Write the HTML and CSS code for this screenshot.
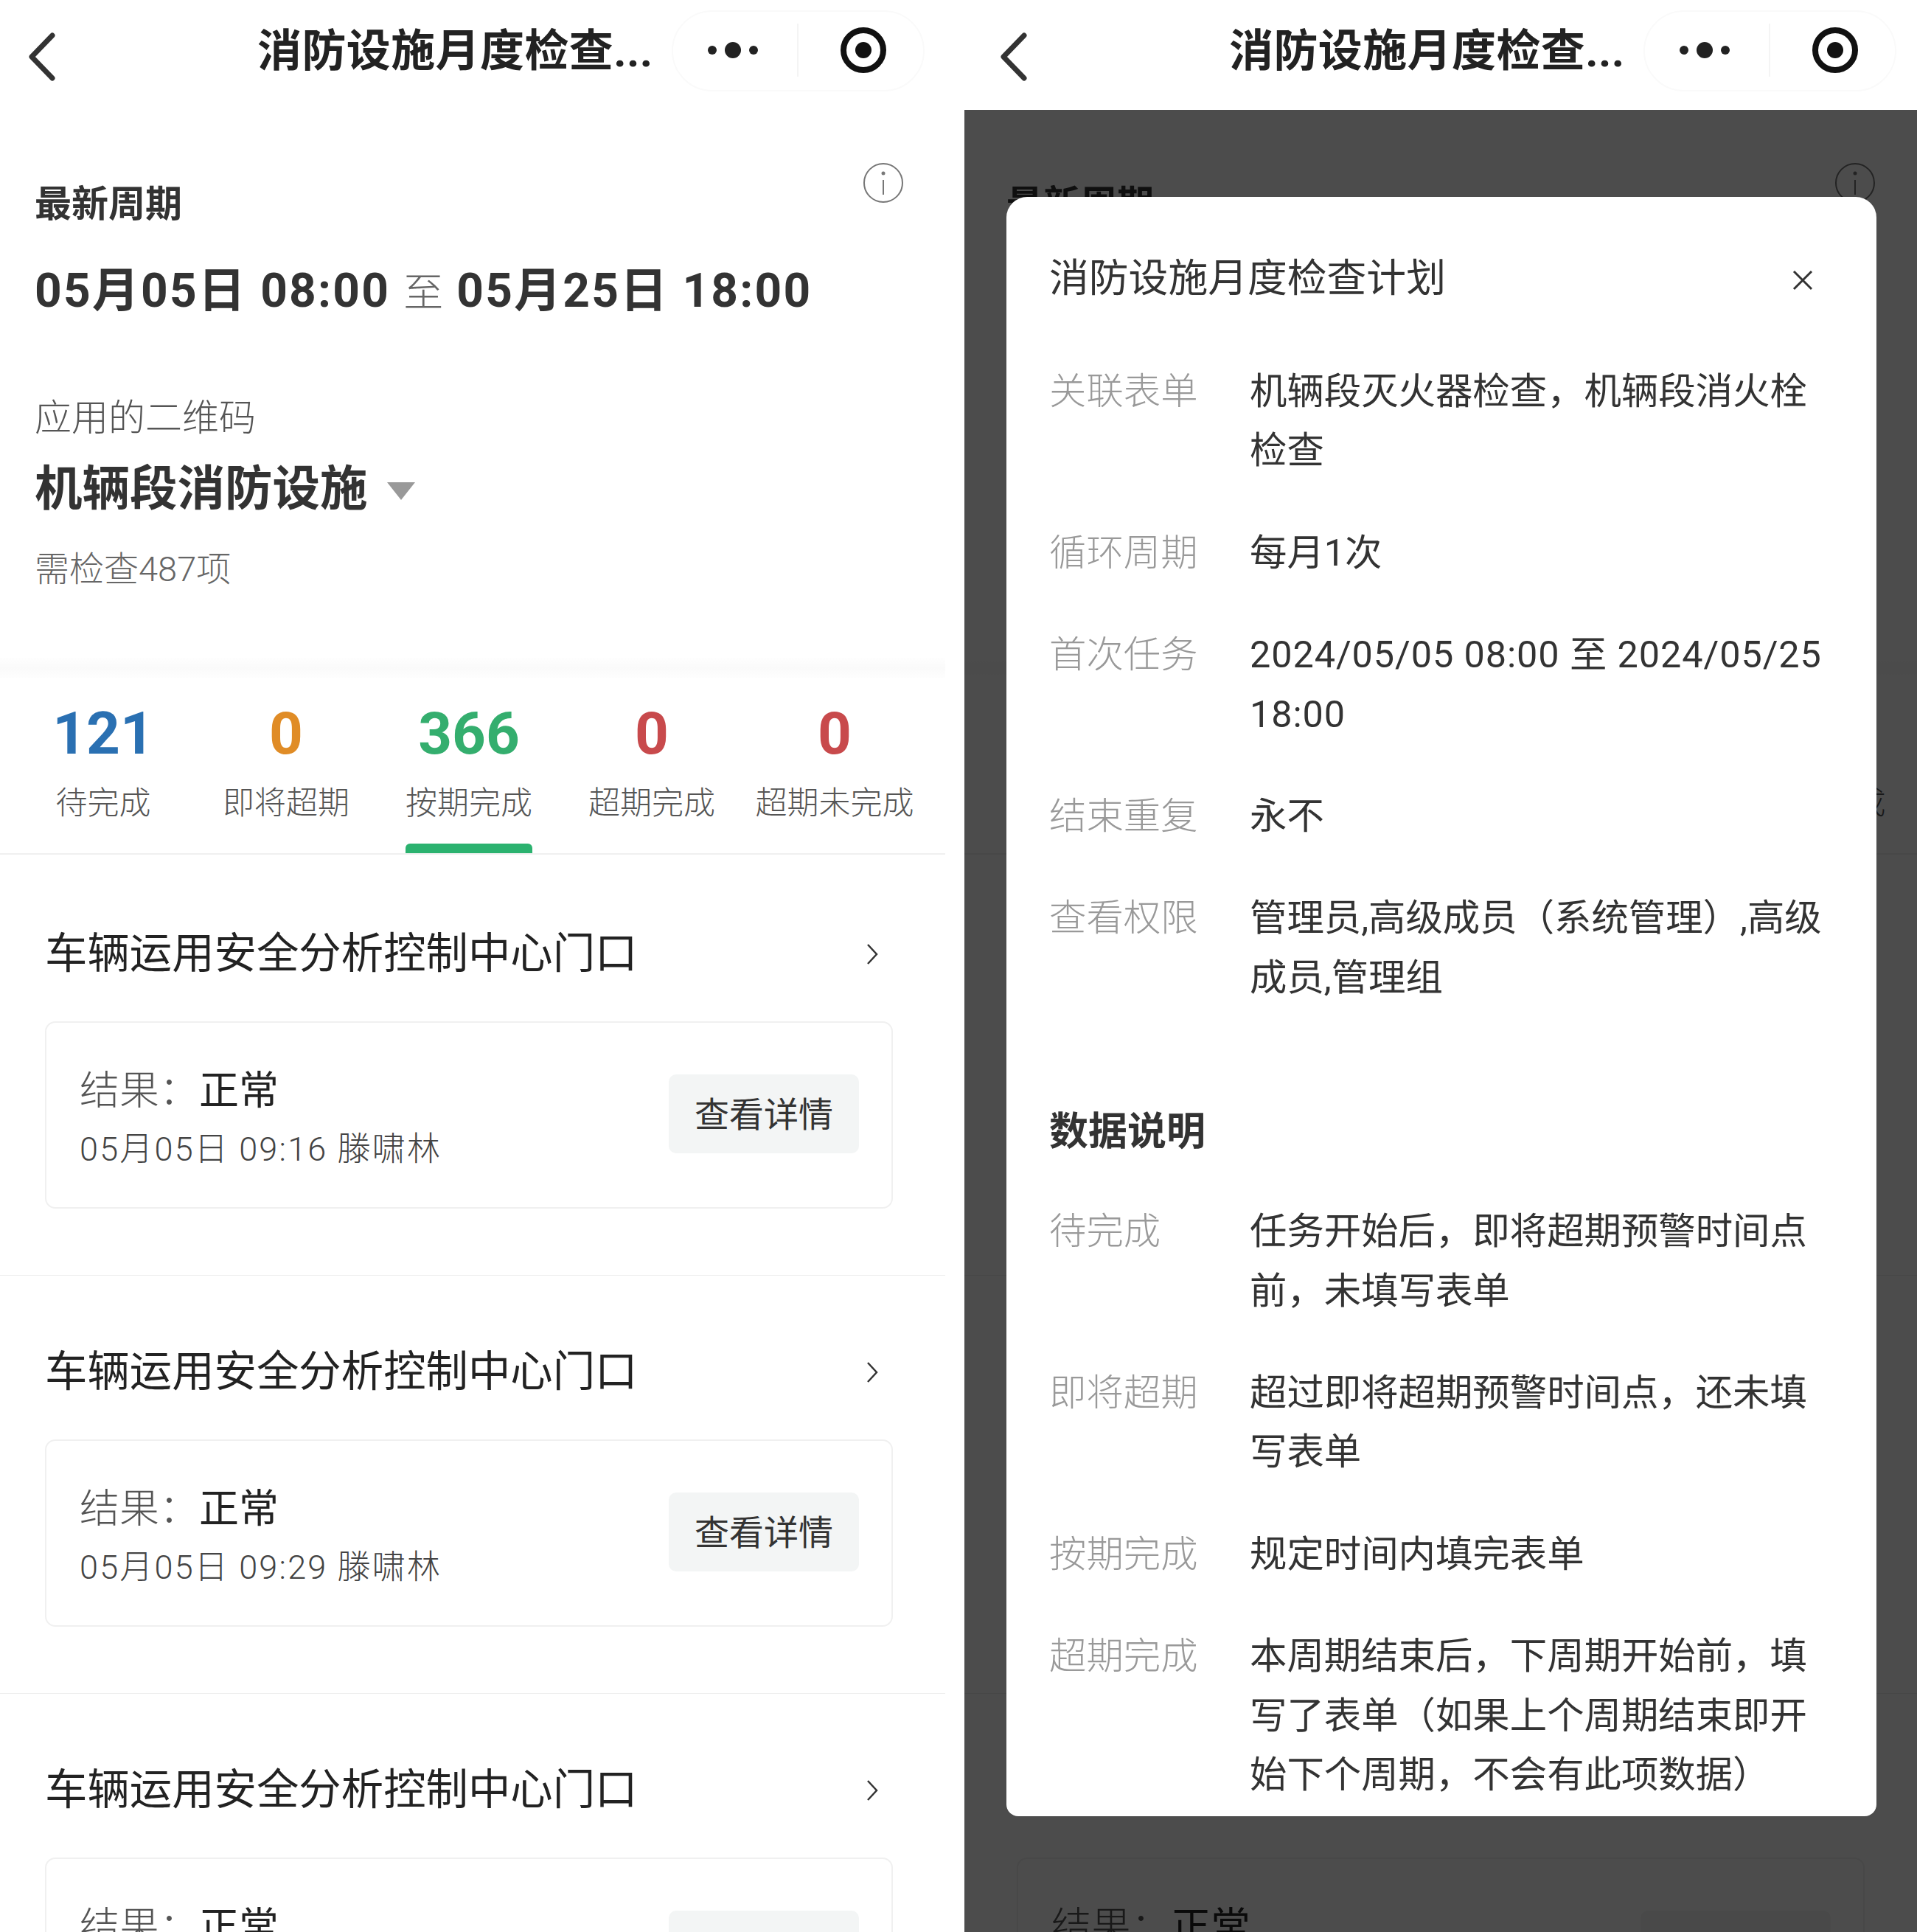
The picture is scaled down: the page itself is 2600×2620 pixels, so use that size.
FILE: index.html
```html
<!DOCTYPE html>
<html lang="zh-CN">
<head>
<meta charset="utf-8">
<title>消防设施月度检查计划</title>
<link rel="stylesheet" href="styles.css">
</head>
<body>
<main class="screen">

<section class="phone phone-left">
  <header class="nav">
    <svg class="back" viewBox="0 0 40 66"><path d="M34 4 6 33l28 29"/></svg>
    <h1 class="nav-title">消防设施月度检查...</h1>
    <div class="capsule">
      <svg class="dots" viewBox="0 0 68 24"><circle cx="6" cy="12" r="6"/><circle cx="34" cy="12" r="11"/><circle cx="62" cy="12" r="6"/></svg>
      <span class="capsule-line"></span>
      <svg class="target" viewBox="0 0 64 64"><circle class="ring" cx="32" cy="32" r="27"/><circle cx="32" cy="32" r="11"/></svg>
    </div>
  </header>
  <div class="summary">
    <div class="summary-head">
      <h2 class="period-label">最新周期</h2>
      <svg class="info" viewBox="0 0 56 56"><circle cx="28" cy="28" r="26"/><path d="M28 24v20"/><circle class="info-dot" cx="28" cy="15" r="2.5"/></svg>
    </div>
    <p class="period"><b>05月05日 08:00</b> <span class="to">至</span> <b>05月25日 18:00</b></p>
    <p class="qr-label">应用的二维码</p>
    <p class="qr-name">机辆段消防设施<i class="caret"></i></p>
    <p class="qr-count">需检查487项</p>
  </div>
  <div class="band"></div>
  <div class="stats">
    <div class="stat"><strong class="num blue">121</strong><span class="stat-label">待完成</span></div>
    <div class="stat"><strong class="num orange">0</strong><span class="stat-label">即将超期</span></div>
    <div class="stat"><strong class="num green">366</strong><span class="stat-label">按期完成</span><i class="stat-bar"></i></div>
    <div class="stat"><strong class="num red">0</strong><span class="stat-label">超期完成</span></div>
    <div class="stat"><strong class="num red">0</strong><span class="stat-label">超期未完成</span></div>
  </div>
  <article class="row">
    <div class="row-head"><h3 class="row-title">车辆运用安全分析控制中心门口</h3><svg class="chev" viewBox="0 0 16 30"><path d="M2 2l12 13L2 28"/></svg></div>
    <div class="card">
      <div class="card-text"><p class="result">结果：<span class="ok">正常</span></p><p class="time">05月05日 09:16 滕啸林</p></div>
      <span class="detail">查看详情</span>
    </div>
  </article>
  <article class="row">
    <div class="row-head"><h3 class="row-title">车辆运用安全分析控制中心门口</h3><svg class="chev" viewBox="0 0 16 30"><path d="M2 2l12 13L2 28"/></svg></div>
    <div class="card">
      <div class="card-text"><p class="result">结果：<span class="ok">正常</span></p><p class="time">05月05日 09:29 滕啸林</p></div>
      <span class="detail">查看详情</span>
    </div>
  </article>
  <article class="row">
    <div class="row-head"><h3 class="row-title">车辆运用安全分析控制中心门口</h3><svg class="chev" viewBox="0 0 16 30"><path d="M2 2l12 13L2 28"/></svg></div>
    <div class="card">
      <div class="card-text"><p class="result">结果：<span class="ok">正常</span></p></div>
      <span class="detail-box"></span>
    </div>
  </article>
</section>

<section class="phone phone-right">
  <header class="nav">
    <svg class="back" viewBox="0 0 40 66"><path d="M34 4 6 33l28 29"/></svg>
    <h1 class="nav-title">消防设施月度检查...</h1>
    <div class="capsule">
      <svg class="dots" viewBox="0 0 68 24"><circle cx="6" cy="12" r="6"/><circle cx="34" cy="12" r="11"/><circle cx="62" cy="12" r="6"/></svg>
      <span class="capsule-line"></span>
      <svg class="target" viewBox="0 0 64 64"><circle class="ring" cx="32" cy="32" r="27"/><circle cx="32" cy="32" r="11"/></svg>
    </div>
  </header>
  <div class="summary">
    <div class="summary-head">
      <h2 class="period-label">最新周期</h2>
      <svg class="info" viewBox="0 0 56 56"><circle cx="28" cy="28" r="26"/><path d="M28 24v20"/><circle class="info-dot" cx="28" cy="15" r="2.5"/></svg>
    </div>
    <p class="period"><b>05月05日 08:00</b> <span class="to">至</span> <b>05月25日 18:00</b></p>
    <p class="qr-label">应用的二维码</p>
    <p class="qr-name">机辆段消防设施<i class="caret"></i></p>
    <p class="qr-count">需检查487项</p>
  </div>
  <div class="band"></div>
  <div class="stats">
    <div class="stat"><strong class="num blue">121</strong><span class="stat-label">待完成</span></div>
    <div class="stat"><strong class="num orange">0</strong><span class="stat-label">即将超期</span></div>
    <div class="stat"><strong class="num green">366</strong><span class="stat-label">按期完成</span><i class="stat-bar"></i></div>
    <div class="stat"><strong class="num red">0</strong><span class="stat-label">超期完成</span></div>
    <div class="stat"><strong class="num red">0</strong><span class="stat-label">超期未完成</span></div>
  </div>
  <article class="row">
    <div class="row-head"><h3 class="row-title">车辆运用安全分析控制中心门口</h3><svg class="chev" viewBox="0 0 16 30"><path d="M2 2l12 13L2 28"/></svg></div>
    <div class="card">
      <div class="card-text"><p class="result">结果：<span class="ok">正常</span></p><p class="time">05月05日 09:16 滕啸林</p></div>
      <span class="detail">查看详情</span>
    </div>
  </article>
  <article class="row">
    <div class="row-head"><h3 class="row-title">车辆运用安全分析控制中心门口</h3><svg class="chev" viewBox="0 0 16 30"><path d="M2 2l12 13L2 28"/></svg></div>
    <div class="card">
      <div class="card-text"><p class="result">结果：<span class="ok">正常</span></p><p class="time">05月05日 09:29 滕啸林</p></div>
      <span class="detail">查看详情</span>
    </div>
  </article>
  <article class="row">
    <div class="row-head"><h3 class="row-title">车辆运用安全分析控制中心门口</h3><svg class="chev" viewBox="0 0 16 30"><path d="M2 2l12 13L2 28"/></svg></div>
    <div class="card">
      <div class="card-text"><p class="result">结果：<span class="ok">正常</span></p></div>
      <span class="detail-box"></span>
    </div>
  </article>

  <div class="mask">
    <div class="modal">
      <div class="modal-head">
        <h2 class="modal-title">消防设施月度检查计划</h2>
        <svg class="close" viewBox="0 0 30 30"><path d="M3 3l24 24M27 3 3 27"/></svg>
      </div>
      <dl class="spec">
        <div class="spec-row"><dt>关联表单</dt><dd>机辆段灭火器检查，机辆段消火栓检查</dd></div>
        <div class="spec-row"><dt>循环周期</dt><dd>每月1次</dd></div>
        <div class="spec-row"><dt>首次任务</dt><dd class="spaced">2024/05/05 08:00 至 2024/05/25 18:00</dd></div>
        <div class="spec-row"><dt>结束重复</dt><dd>永不</dd></div>
        <div class="spec-row"><dt>查看权限</dt><dd>管理员,高级成员（系统管理）,高级成员,管理组</dd></div>
      </dl>
      <h2 class="data-title">数据说明</h2>
      <dl class="spec">
        <div class="spec-row"><dt>待完成</dt><dd>任务开始后，即将超期预警时间点前，未填写表单</dd></div>
        <div class="spec-row"><dt>即将超期</dt><dd>超过即将超期预警时间点，还未填写表单</dd></div>
        <div class="spec-row"><dt>按期完成</dt><dd>规定时间内填完表单</dd></div>
        <div class="spec-row"><dt>超期完成</dt><dd>本周期结束后，下周期开始前，填写了表单（如果上个周期结束即开始下个周期，不会有此项数据）</dd></div>
      </dl>
    </div>
  </div>
</section>

</main>
</body>
</html>
```

FILE: styles.css
```css
* { box-sizing: border-box; }
html, body { margin: 0; padding: 0; background: #fff; }
body {
  font-family: Roboto, "Noto Sans CJK SC", sans-serif;
  color: #333;
}
h1, h2, h3, p, dl, dd, dt { margin: 0; font-weight: 400; }
.screen {
  width: 2600px;
  height: 2620px;
  display: flex;
  gap: 26px;
  overflow: hidden;
}
.phone {
  position: relative;
  flex: none;
  width: 1292px;
  height: 2620px;
  overflow: hidden;
  background: #fff;
}
.phone-left { margin-left: -10px; }

/* nav */
.nav {
  position: relative;
  z-index: 2;
  height: 149px;
  display: flex;
  align-items: flex-start;
  padding-left: 47px;
  background: #fff;
}
.back {
  flex: none;
  width: 40px;
  height: 66px;
  margin-top: 44px;
  fill: none;
  stroke: #333;
  stroke-width: 7;
  stroke-linecap: round;
  stroke-linejoin: round;
}
.nav-title {
  flex: none;
  width: 562px;
  margin: 30px 0 0 272px;
  font-size: 60px;
  line-height: 80px;
  font-weight: 700;
  color: #222;
  letter-spacing: .4px;
  white-space: nowrap;
}
.capsule {
  flex: none;
  width: 343px;
  height: 110px;
  margin: 14px 0 0 0;
  display: flex;
  align-items: center;
  padding: 0 0 3px 47px;
  border: 2px solid #fafafa;
  border-radius: 55px;
}
.dots { width: 68px; height: 24px; fill: #222; }
.capsule-line { width: 2px; height: 72px; margin-left: 53px; background: #f4f4f4; }
.target { width: 64px; height: 64px; margin-left: 56px; fill: #111; }
.target .ring { fill: none; stroke: #111; stroke-width: 8; }

/* summary */
.summary { padding: 93px 57px 0; }
.summary-head { display: flex; justify-content: space-between; align-items: flex-start; }
.period-label { font-size: 50px; line-height: 70px; font-weight: 700; color: #333; }
.info {
  width: 56px;
  height: 56px;
  margin: -22px -1px 0 0;
  fill: none;
  stroke: #777;
  stroke-width: 2;
}
.info-dot { fill: #777; stroke: none; }
.period {
  margin-top: 43px;
  font-size: 64px;
  line-height: 80px;
  color: #333;
  letter-spacing: 2.2px;
  white-space: nowrap;
}
.period b { font-weight: 700; }
.to { font-size: 54px; font-weight: 300; color: #666; letter-spacing: 0; }
.qr-label { margin-top: 94px; font-size: 50px; line-height: 70px; font-weight: 300; color: #555; }
.qr-name {
  margin-top: 21px;
  display: flex;
  align-items: center;
  font-size: 64.5px;
  line-height: 80px;
  font-weight: 700;
  color: #333;
}
.caret {
  width: 0;
  height: 0;
  margin: 6px 0 0 26px;
  border-style: solid;
  border-width: 24px 19px 0;
  border-color: #999 transparent transparent;
}
.qr-count { margin-top: 39px; font-size: 47px; line-height: 60px; font-weight: 300; color: #666; }
.band { height: 28px; margin-top: 90px; background: linear-gradient(#fefefe, #fafafa 50%, #fefefe); }

/* stats */
.stats {
  display: grid;
  grid-template-columns: repeat(5, 248px);
  margin-bottom: 4px;
  padding: 30px 0 0 26px;
  border-bottom: 2px solid #f0f0f0;
}
.stat { display: flex; flex-direction: column; align-items: center; }
.num { font-size: 80px; line-height: 90px; font-weight: 700; }
.blue { color: #2a70b2; }
.orange { color: #e08c26; }
.green { color: #34ae6e; }
.red { color: #c84a4c; }
.stat-label { margin-top: 19px; font-size: 43px; line-height: 60px; font-weight: 300; color: #555; white-space: nowrap; }
.stat-bar {
  display: block;
  width: 172px;
  height: 13px;
  margin-top: 25px;
  border-radius: 6px 6px 0 0;
  background: #2bb26f;
}

/* rows */
.row { padding: 91px 71px 90px 71px; border-bottom: 1px solid #eee; }
.row-head { display: flex; align-items: center; justify-content: space-between; padding-right: 20px; }
.row-title { font-size: 57.4px; line-height: 80px; color: #222; white-space: nowrap; }
.chev { width: 16px; height: 30px; fill: none; stroke: #333; stroke-width: 2.5; }
.card {
  display: flex;
  align-items: flex-start;
  justify-content: space-between;
  height: 254px;
  margin-top: 51px;
  padding: 58px 44px 0 45px;
  background: #fff;
  border: 2px solid #f0f0f0;
  border-radius: 14px;
}
.result { font-size: 54px; line-height: 70px; font-weight: 300; color: #555; }
.ok { color: #222; font-weight: 400; }
.time { margin-top: 14px; font-size: 45px; line-height: 60px; font-weight: 300; color: #444; letter-spacing: 2.2px; white-space: nowrap; }
.detail, .detail-box {
  flex: none;
  width: 258px;
  height: 107px;
  margin-top: 12px;
  border-radius: 10px;
  background: #f3f5f5;
}
.detail {
  display: flex;
  align-items: center;
  justify-content: center;
  padding-bottom: 6px;
  font-size: 47px;
  color: #333;
}

/* parts of the page behind the open dialog */
.phone-right .period,
.phone-right .qr-label,
.phone-right .qr-name,
.phone-right .qr-count,
.phone-right .num,
.phone-right .stat:not(:last-child) .stat-label,
.phone-right .row-title,
.phone-right .row:not(:last-of-type) .card { visibility: hidden; }

/* dialog */
.mask {
  position: absolute;
  left: 0;
  top: 149px;
  right: 0;
  bottom: 0;
  z-index: 1;
  background: rgba(0, 0, 0, .7);
}
.modal {
  position: absolute;
  left: 57px;
  top: 118px;
  width: 1180px;
  height: 2196px;
  padding: 71px 58px 0;
  overflow: hidden;
  background: #fff;
  border-radius: 28px 28px 16px 16px;
}
.modal-head { display: flex; align-items: center; justify-content: space-between; padding-right: 27px; }
.modal-title { font-size: 53.8px; line-height: 80px; color: #333; }
.close { width: 30px; height: 30px; margin-top: 4px; fill: none; stroke: #333; stroke-width: 3; }
.spec { margin-top: 73px; }
.data-title + .spec { margin-top: 55px; }
.spec-row { display: flex; margin-bottom: 58px; font-size: 50.4px; line-height: 80.4px; }
.spec-row dt { flex: none; width: 272px; font-weight: 300; color: #999; }
.spec-row dd { flex: 1; min-width: 0; color: #333; }
.spec-row .spaced { letter-spacing: .9px; }
.spec:first-of-type .spec-row:last-child { margin-bottom: 0; }
.data-title { margin-top: 129px; font-size: 53px; line-height: 80px; font-weight: 700; color: #333; }
```
